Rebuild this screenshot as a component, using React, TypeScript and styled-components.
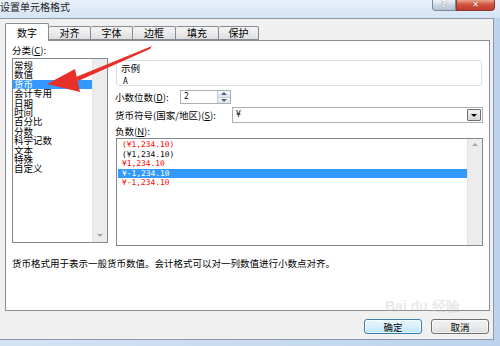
import React from "react";
import styled, { createGlobalStyle } from "styled-components";

const GlobalStyle = createGlobalStyle`
  html, body {
    margin: 0;
    padding: 0;
  }
  body {
    font-family: "Noto Sans CJK SC", "Noto Sans", sans-serif;
    font-size: 9.5px;
    color: #000;
  }
`;

const Window = styled.div`
  position: relative;
  width: 500px;
  height: 346px;
  overflow: hidden;
  background: linear-gradient(90deg, #d4e3f4, #bcd3ec);
  display: flex;
  flex-direction: column;
`;

const TitleBar = styled.div`
  height: 18px;
  flex: none;
  display: flex;
  align-items: flex-start;
  justify-content: space-between;
  padding-right: 5px;
  background: linear-gradient(180deg, #e8f0f9 0%, #d5e4f4 100%);
`;

const TitleText = styled.span`
  font-size: 10px;
  line-height: 13px;
  color: #1e1e1e;
`;

const Controls = styled.div`
  display: flex;
`;

const CtrlButton = styled.div<{ $close?: boolean }>`
  width: ${(p) => (p.$close ? "37px" : "22px")};
  height: 10px;
  display: flex;
  align-items: center;
  justify-content: center;
  font-family: "DejaVu Sans", sans-serif;
  font-size: 8px;
  font-weight: bold;
  line-height: 10px;
  color: #fff;
  border: 1px solid ${(p) => (p.$close ? "#8d3a2f" : "#7a8799")};
  border-top: none;
  border-radius: ${(p) => (p.$close ? "0 0 4px 0" : "0 0 0 4px")};
  background: ${(p) =>
    p.$close
      ? "linear-gradient(180deg, #e8a593 0%, #d1553f 45%, #c0392b 100%)"
      : "linear-gradient(180deg, #eef3f8 0%, #cdd7e3 50%, #b7c4d4 100%)"};
  text-shadow: 0 0 2px rgba(0, 0, 0, 0.5);
`;

const DialogBody = styled.div`
  width: 494px;
  height: 322px;
  flex: none;
  box-sizing: border-box;
  background: #f0f0f0;
  border-top: 1px solid #8d99a8;
  border-right: 1px solid #8d99a8;
  border-bottom: 1px solid #8d99a8;
  display: flex;
  flex-direction: column;
`;

const TabStrip = styled.div`
  height: 21px;
  flex: none;
  display: flex;
  align-items: flex-end;
  padding-left: 5px;
`;

const Tab = styled.div<{ $active?: boolean; $w: number }>`
  width: ${(p) => p.$w}px;
  height: ${(p) => (p.$active ? "18px" : "14px")};
  margin-bottom: ${(p) => (p.$active ? "-1px" : "0")};
  box-sizing: border-box;
  border: 1px solid #898c95;
  border-bottom: ${(p) => (p.$active ? "none" : "1px solid #898c95")};
  border-left: ${(p) => (p.$active ? "1px solid #898c95" : "none")};
  border-radius: 2px 2px 0 0;
  background: ${(p) =>
    p.$active ? "#fff" : "linear-gradient(180deg, #f3f3f3 0%, #ebebeb 50%, #dedede 100%)"};
  display: flex;
  align-items: center;
  justify-content: center;
  font-size: 10px;
  line-height: 12px;
  position: relative;
  z-index: ${(p) => (p.$active ? 1 : 0)};
`;

const Panel = styled.div`
  margin-left: 5px;
  width: 485px;
  height: 271px;
  flex: none;
  box-sizing: border-box;
  border: 1px solid #898c95;
  background: #fff;
  padding: 3px 6px 0 6px;
  display: flex;
  flex-direction: column;
`;

const TopRow = styled.div`
  display: flex;
  gap: 7px;
`;

const LeftCol = styled.div`
  width: 97px;
  display: flex;
  flex-direction: column;
`;

const RightCol = styled.div`
  width: 368px;
  display: flex;
  flex-direction: column;
`;

const Label = styled.div<{ $mt?: number }>`
  margin-top: ${(p) => p.$mt || 0}px;
  line-height: 12px;
  height: 12px;
  white-space: nowrap;
`;

const Key = styled.span`
  text-decoration: underline;
`;

const ListBox = styled.div<{ $h: number; $ml?: number; $mt?: number }>`
  margin-top: ${(p) => (p.$mt === undefined ? 2 : p.$mt)}px;
  margin-left: ${(p) => p.$ml || 0}px;
  height: ${(p) => p.$h}px;
  box-sizing: border-box;
  border: 1px solid #828790;
  display: flex;
`;

const ListItems = styled.div<{ $pt: number }>`
  flex: 1;
  padding-top: ${(p) => p.$pt}px;
  display: flex;
  flex-direction: column;
`;

const CatItem = styled.div<{ $selected?: boolean }>`
  height: 9.4px;
  line-height: 9.4px;
  padding-left: 1px;
  white-space: nowrap;
  background: ${(p) => (p.$selected ? "#3399ff" : "transparent")};
  color: ${(p) => (p.$selected ? "#fff" : "#000")};
`;

const NegItem = styled.div<{ $selected?: boolean; $red?: boolean }>`
  height: 9.5px;
  line-height: 9.5px;
  padding-left: 4px;
  margin-left: 1px;
  font-family: "DejaVu Sans Mono", "Liberation Mono", monospace;
  font-size: 7.9px;
  white-space: pre;
  background: ${(p) => (p.$selected ? "#3399ff" : "transparent")};
  color: ${(p) => (p.$selected ? "#fff" : p.$red ? "#ff0000" : "#000")};
`;

const ScrollBar = styled.div`
  width: 15px;
  flex: none;
  background: #ececec;
  border-left: 1px solid #e2e2e2;
  display: flex;
  flex-direction: column;
  justify-content: space-between;
  align-items: center;
  padding: 4px 0 5px;
  box-sizing: border-box;
`;

const Arrow = styled.div<{ $up?: boolean; $color?: string }>`
  width: 0;
  height: 0;
  border-left: 3px solid transparent;
  border-right: 3px solid transparent;
  ${(p) =>
    p.$up
      ? `border-bottom: 3px solid ${p.$color || "#a6a6a6"};`
      : `border-top: 3px solid ${p.$color || "#a6a6a6"};`}
`;

const Spacer = styled.div`
  width: 6px;
  height: 3px;
`;

const GroupBox = styled.div`
  margin-top: 16px;
  margin-left: 1px;
  width: 366px;
  height: 26px;
  box-sizing: border-box;
  border: 1px solid #d5dfe5;
  border-radius: 3px;
  padding-left: 3px;
`;

const Legend = styled.div`
  display: inline-block;
  margin-top: -1px;
  padding: 0 1px;
  background: #fff;
  line-height: 12px;
  height: 11px;
`;

const Sample = styled.div`
  margin-top: 1px;
  padding-left: 3px;
  line-height: 12px;
  font-family: "DejaVu Sans Mono", monospace;
  font-size: 8px;
`;

const FieldRow = styled.div<{ $mt: number; $h: number }>`
  margin-top: ${(p) => p.$mt}px;
  height: ${(p) => p.$h}px;
  display: flex;
  align-items: center;
`;

const FieldLabel = styled.div<{ $w: number }>`
  width: ${(p) => p.$w}px;
  flex: none;
  white-space: nowrap;
  line-height: 12px;
`;

const Spinner = styled.div`
  width: 51px;
  height: 14px;
  box-sizing: border-box;
  border: 1px solid #abadb3;
  display: flex;
`;

const Value = styled.div`
  flex: 1;
  padding-left: 3px;
  line-height: 12px;
  font-family: "DejaVu Sans Mono", monospace;
  font-size: 8px;
`;

const SpinButtons = styled.div`
  width: 12px;
  display: flex;
  flex-direction: column;
  border-left: 1px solid #c3cbd6;
`;

const SpinHalf = styled.div`
  flex: 1;
  display: flex;
  align-items: center;
  justify-content: center;
  background: linear-gradient(180deg, #f5f7fa, #dfe5ec);
  border-bottom: 1px solid #c8d0da;
  &:last-child {
    border-bottom: none;
  }
`;

const Select = styled.div`
  width: 251px;
  height: 16px;
  box-sizing: border-box;
  border: 1px solid #abadb3;
  display: flex;
`;

const SelectValue = styled.div`
  flex: 1;
  padding-left: 3px;
  line-height: 14px;
  font-family: "DejaVu Sans Mono", monospace;
  font-size: 8px;
`;

const SelectButton = styled.div`
  width: 14px;
  margin: 1px;
  box-sizing: border-box;
  border: 1px solid #707070;
  border-radius: 1px;
  background: linear-gradient(180deg, #f2f2f2, #d6d6d6);
  display: flex;
  align-items: center;
  justify-content: center;
`;

const Description = styled.div`
  margin-top: 11px;
  line-height: 12px;
  white-space: nowrap;
`;

const Footer = styled.div`
  flex: 1;
  display: flex;
  justify-content: flex-end;
  align-items: flex-start;
  gap: 9px;
  padding: 8px 4px 0 0;
`;

const Button = styled.div<{ $default?: boolean }>`
  width: 58px;
  height: 15px;
  box-sizing: border-box;
  border: 1px solid ${(p) => (p.$default ? "#3c7fb1" : "#707070")};
  border-radius: 3px;
  background: ${(p) =>
    p.$default
      ? "linear-gradient(180deg, #eaf6fd 0%, #d9f0fc 50%, #bee6fd 100%)"
      : "linear-gradient(180deg, #f2f2f2 0%, #ebebeb 50%, #dddddd 100%)"};
  box-shadow: inset 0 0 0 1px rgba(255, 255, 255, 0.6);
  display: flex;
  align-items: center;
  justify-content: center;
  line-height: 12px;
`;

const Watermark = styled.div`
  position: absolute;
  left: 385px;
  top: 298px;
  font-family: "Liberation Sans", sans-serif;
  font-size: 14px;
  font-weight: bold;
  color: rgba(190, 190, 190, 0.35);
  pointer-events: none;
`;

const Overlay = styled.svg`
  position: absolute;
  left: 0;
  top: 0;
  pointer-events: none;
`;

const categories = [
  "常规",
  "数值",
  "货币",
  "会计专用",
  "日期",
  "时间",
  "百分比",
  "分数",
  "科学记数",
  "文本",
  "特殊",
  "自定义",
];

const negatives = [
  { text: "(¥1,234.10)", red: true },
  { text: "(¥1,234.10)", red: false },
  { text: "¥1,234.10", red: true },
  { text: "¥-1,234.10", red: false, selected: true },
  { text: "¥-1,234.10", red: true },
];

const tabs = [
  { name: "数字", w: 44, active: true },
  { name: "对齐", w: 42 },
  { name: "字体", w: 42 },
  { name: "边框", w: 43 },
  { name: "填充", w: 43 },
  { name: "保护", w: 40 },
];

const App: React.FC = () => (
  <>
    <GlobalStyle />
    <Window>
      <TitleBar>
        <TitleText>设置单元格格式</TitleText>
        <Controls>
          <CtrlButton>?</CtrlButton>
          <CtrlButton $close>✕</CtrlButton>
        </Controls>
      </TitleBar>
      <DialogBody>
        <TabStrip>
          {tabs.map((t) => (
            <Tab key={t.name} $w={t.w} $active={t.active}>
              {t.name}
            </Tab>
          ))}
        </TabStrip>
        <Panel>
          <TopRow>
            <LeftCol>
              <Label>
                分类(<Key>C</Key>):
              </Label>
              <ListBox $h={185}>
                <ListItems $pt={2}>
                  {categories.map((c) => (
                    <CatItem key={c} $selected={c === "货币"}>
                      {c}
                    </CatItem>
                  ))}
                </ListItems>
                <ScrollBar>
                  <Spacer />
                  <Arrow />
                </ScrollBar>
              </ListBox>
            </LeftCol>
            <RightCol>
              <GroupBox>
                <Legend>示例</Legend>
                <Sample>A</Sample>
              </GroupBox>
              <FieldRow $mt={4} $h={14}>
                <FieldLabel $w={65}>
                  小数位数(<Key>D</Key>):
                </FieldLabel>
                <Spinner>
                  <Value>2</Value>
                  <SpinButtons>
                    <SpinHalf>
                      <Arrow $up $color="#4d6185" />
                    </SpinHalf>
                    <SpinHalf>
                      <Arrow $color="#4d6185" />
                    </SpinHalf>
                  </SpinButtons>
                </Spinner>
              </FieldRow>
              <FieldRow $mt={3} $h={16}>
                <FieldLabel $w={117}>
                  货币符号(国家/地区)(<Key>S</Key>):
                </FieldLabel>
                <Select>
                  <SelectValue>¥</SelectValue>
                  <SelectButton>
                    <Arrow $color="#000" />
                  </SelectButton>
                </Select>
              </FieldRow>
              <Label $mt={2}>
                负数(<Key>N</Key>):
              </Label>
              <ListBox $h={108} $ml={1} $mt={1}>
                <ListItems $pt={1}>
                  {negatives.map((n, i) => (
                    <NegItem key={i} $red={n.red} $selected={n.selected}>
                      {n.text}
                    </NegItem>
                  ))}
                </ListItems>
                <ScrollBar>
                  <Arrow $up />
                  <Spacer />
                </ScrollBar>
              </ListBox>
            </RightCol>
          </TopRow>
          <Description>
            货币格式用于表示一般货币数值。会计格式可以对一列数值进行小数点对齐。
          </Description>
        </Panel>
        <Footer>
          <Button $default>确定</Button>
          <Button>取消</Button>
        </Footer>
      </DialogBody>
      <Watermark>Bai du 经验</Watermark>
      <Overlay width={500} height={346} viewBox="0 0 500 346">
        <path d="M152 46 L150 49 L78 81 L76 77 Z" fill="#e8302a" />
        <path d="M47 84 L75 69 L80 92 Z" fill="#e8302a" />
      </Overlay>
    </Window>
  </>
);

export default App;
